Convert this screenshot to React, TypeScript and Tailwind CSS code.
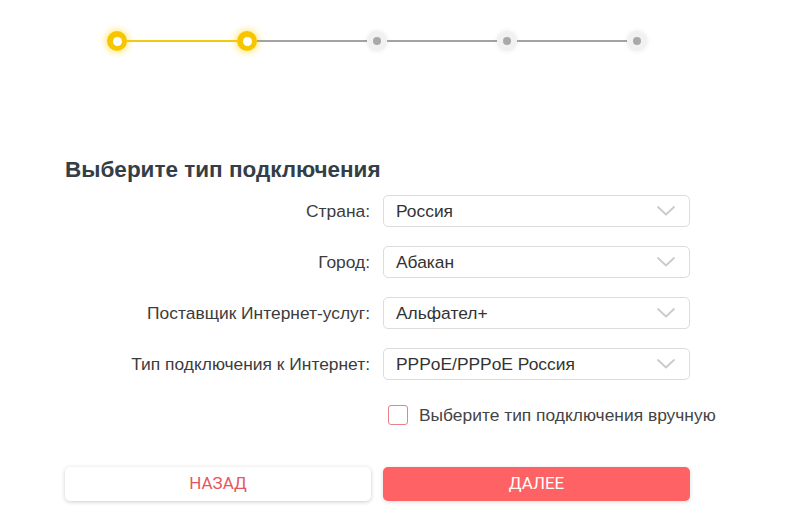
import React from "react";

const Chevron = () => (
  <svg width="20" height="12" viewBox="0 0 20 12" fill="none">
    <path d="M2 2 L10 9.5 L18 2" stroke="#cacaca" strokeWidth="1.8" strokeLinecap="round" strokeLinejoin="round" />
  </svg>
);

const ActiveDot = () => (
  <div className="w-[20px] h-[20px] rounded-full bg-[#f7c600] flex items-center justify-center shadow-[0_0_6px_2px_rgba(255,210,0,0.45)] shrink-0">
    <div className="w-[9px] h-[9px] rounded-full bg-white" />
  </div>
);

const IdleDot = () => (
  <div className="w-[20px] h-[20px] rounded-full bg-[#f1f1f1] flex items-center justify-center shadow-[0_0_4px_1px_rgba(0,0,0,0.06)] shrink-0">
    <div className="w-[8px] h-[8px] rounded-full bg-[#a9a9a9]" />
  </div>
);

const Line = ({ yellow }: { yellow?: boolean }) => (
  <div className={`w-[110px] h-[2px] ${yellow ? "bg-[#f2c811]" : "bg-[#a3a3a3]"}`} />
);

const Row = ({ label, value }: { label: string; value: string }) => (
  <div className="flex items-center h-[32px]">
    <div className="w-[306px] text-right text-[17.4px] text-[#3c3c3c] pr-[1px] whitespace-nowrap">{label}</div>
    <div className="ml-[12px] w-[307px] h-[32px] border border-[#dcdcdc] rounded-[5px] flex items-center justify-between pl-[12px] pr-[13px]">
      <span className="text-[17.4px] text-[#333]">{value}</span>
      <Chevron />
    </div>
  </div>
);

export default function App() {
  return (
    <div className="w-[790px] h-[525px] bg-white overflow-hidden" style={{ fontFamily: '"Liberation Sans", Arial, sans-serif' }}>
      <div className="pt-[31px] pl-[107px] flex items-center">
        <ActiveDot />
        <Line yellow />
        <ActiveDot />
        <Line />
        <IdleDot />
        <Line />
        <IdleDot />
        <Line />
        <IdleDot />
      </div>

      <div className="pl-[65px] pt-[106px]">
        <h1 className="text-[22.5px] font-bold text-[#343e46] leading-[26px] whitespace-nowrap">Выберите тип подключения</h1>
        <div className="mt-[12px] flex flex-col gap-[19px]">
          <Row label="Страна:" value="Россия" />
          <Row label="Город:" value="Абакан" />
          <Row label="Поставщик Интернет-услуг:" value="Альфател+" />
          <Row label="Тип подключения к Интернет:" value="PPPoE/PPPoE Россия" />
        </div>
        <div className="mt-[22px] ml-[323px] flex items-center">
          <div className="w-[20px] h-[20px] border border-[#e3838a] rounded-[3px]" />
          <span className="ml-[11px] text-[17.4px] text-[#444] whitespace-nowrap">Выберите тип подключения вручную</span>
        </div>
        <div className="mt-[39px] flex gap-[12px]" style={{ fontFamily: 'Roboto, "Liberation Sans", sans-serif' }}>
          <button className="w-[306px] h-[34px] rounded-[5px] bg-white text-[#e5575b] text-[17px] shadow-[0_1px_4px_rgba(0,0,0,0.2)]">
            НАЗАД
          </button>
          <button className="w-[307px] h-[34px] rounded-[5px] bg-[#ff6264] text-white text-[17px] shadow-[0_1px_4px_rgba(0,0,0,0.15)]">
            ДАЛЕЕ
          </button>
        </div>
      </div>
    </div>
  );
}
